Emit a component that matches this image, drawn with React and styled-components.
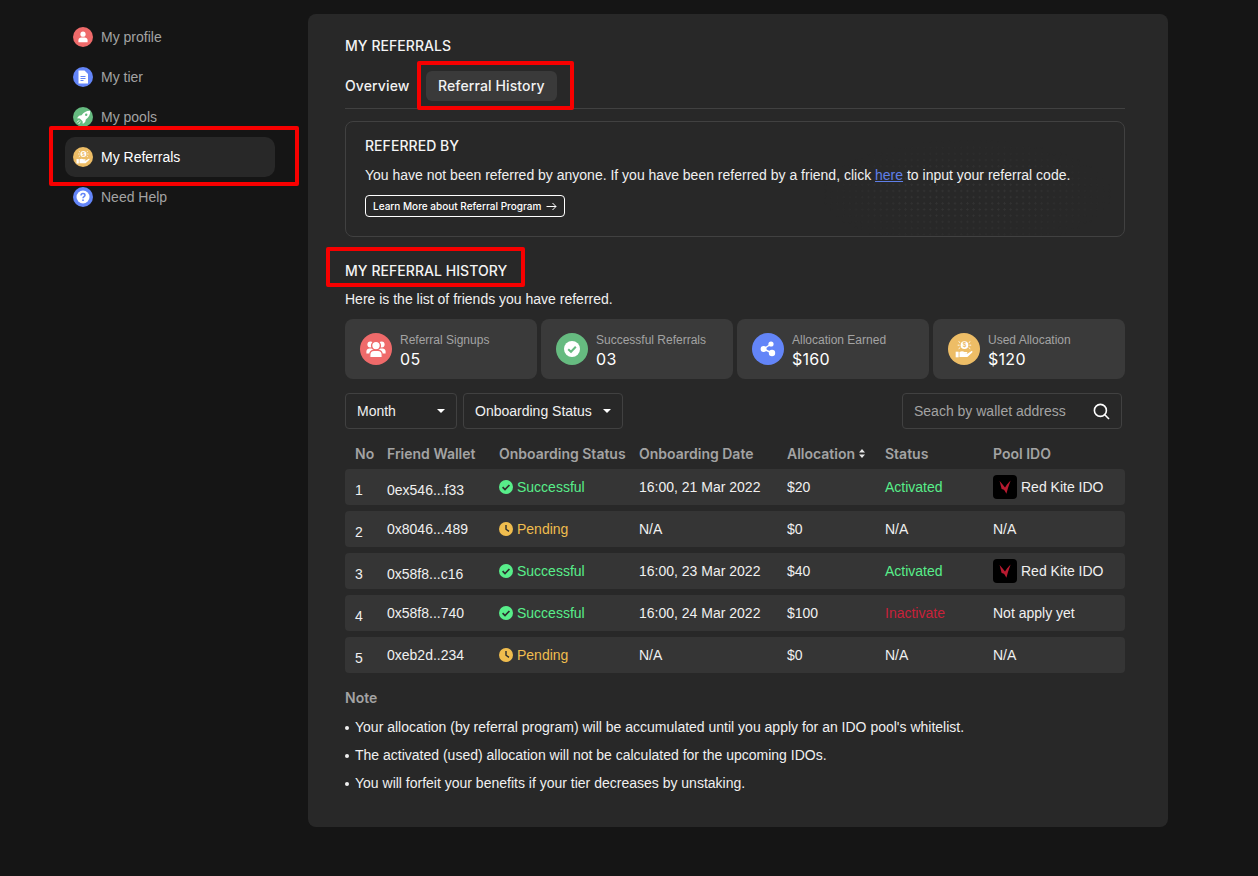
import React from 'react';
import styled, { createGlobalStyle } from 'styled-components';

const inter = '"Inter", "Liberation Sans", sans-serif';
const helvetica = '"Liberation Sans", Arial, sans-serif';

const colors = {
  page: '#151515',
  panel: '#282828',
  stat: '#3a3a3a',
  row: '#353535',
  red: '#ef6a6a',
  blue: '#6385f8',
  green: '#66bb80',
  gold: '#edbd66',
  success: '#58ee8a',
  pending: '#f0bd4e',
  inactive: '#c8213a',
  muted: '#a3a3a3',
  line: '#414141',
};

const GlobalStyle = createGlobalStyle`
  html, body {
    margin: 0;
    padding: 0;
    background: ${colors.page};
  }
  * {
    box-sizing: border-box;
  }
`;

const Page = styled.div`
  display: flex;
  align-items: flex-start;
  width: 1258px;
  height: 876px;
  padding: 14px 0 0 65px;
  overflow: hidden;
  background: ${colors.page};
  color: #fff;
  font-family: ${helvetica};
`;

const Sidebar = styled.nav`
  display: flex;
  flex-direction: column;
  width: 210px;
  margin-top: 3px;
  margin-right: 33px;
`;

const NavItem = styled.div`
  position: relative;
  display: flex;
  align-items: center;
  gap: 8px;
  height: 40px;
  padding-left: 8px;
  border-radius: 10px;
  background: ${(p) => (p.$active ? colors.panel : 'transparent')};
  color: ${(p) => (p.$active ? '#fff' : colors.muted)};
  font-size: 14px;
`;

const Annotation = styled.div`
  position: absolute;
  top: ${(p) => p.$top}px;
  right: ${(p) => p.$right}px;
  bottom: ${(p) => p.$bottom}px;
  left: ${(p) => p.$left}px;
  border: 4px solid #f70000;
  border-radius: 2px;
  pointer-events: none;
  z-index: 2;
`;

const IconDisc = styled.span`
  display: flex;
  flex: none;
  align-items: center;
  justify-content: center;
  width: ${(p) => p.$size}px;
  height: ${(p) => p.$size}px;
  border-radius: 50%;
  background: ${(p) => p.$color};
`;

const Panel = styled.main`
  width: 860px;
  height: 813px;
  padding: 23px 43px 0 37px;
  border-radius: 8px;
  background: ${colors.panel};
`;

const Heading = styled.h2`
  position: relative;
  display: block;
  width: fit-content;
  margin: 0;
  color: #f4f4f4;
  font-family: ${inter};
  font-size: 14px;
  font-weight: 500;
  letter-spacing: 0.05px;
  line-height: 17px;
`;

const Tabs = styled.div`
  display: flex;
  align-items: center;
  gap: 16px;
  margin-top: 17px;
  padding-bottom: 7px;
  border-bottom: 1px solid ${colors.line};
  font-family: ${inter};
  font-size: 14px;
  font-weight: 500;
  letter-spacing: 0.12px;
`;

const Tab = styled.div`
  position: relative;
  display: flex;
  align-items: center;
  height: 30px;
  padding: ${(p) => (p.$active ? '0 12.5px 2px' : '0 0 2px')};
  border-radius: 6px;
  background: ${(p) => (p.$active ? '#3a3a3a' : 'transparent')};
  color: #f2f2f2;
`;

const ReferredCard = styled.section`
  position: relative;
  height: 116px;
  margin-top: 12px;
  padding: 15px 19px;
  overflow: hidden;
  border: 1px solid ${colors.line};
  border-radius: 8px;
`;

const DotPattern = styled.div`
  position: absolute;
  top: 4px;
  right: 12px;
  width: 290px;
  height: 110px;
  background-image: radial-gradient(circle, #333333 1px, transparent 1.2px);
  background-size: 6.2px 6.2px;
  -webkit-mask-image: radial-gradient(ellipse 50% 50% at 50% 62%, #000 35%, transparent 100%);
  mask-image: radial-gradient(ellipse 50% 50% at 50% 62%, #000 35%, transparent 100%);
`;

const ReferredText = styled.p`
  position: relative;
  margin: 13px 0 0;
  color: #f0f0f0;
  font-size: 14px;
  line-height: 17px;
`;

const HereLink = styled.a`
  color: #5f7fe8;
  text-decoration: underline;
`;

const LearnMore = styled.button`
  position: relative;
  display: flex;
  align-items: center;
  gap: 5px;
  height: 22px;
  margin-top: 11px;
  padding: 0 7px;
  border: 1px solid #fff;
  border-radius: 4px;
  background: transparent;
  color: #fff;
  font-family: ${inter};
  font-size: 10px;
  font-weight: 500;
`;

const HistorySection = styled.section`
  margin-top: 25px;
`;

const Intro = styled.p`
  margin: 12px 0 0;
  color: #f0f0f0;
  font-size: 14px;
  line-height: 17px;
`;

const StatGrid = styled.div`
  display: grid;
  grid-template-columns: repeat(4, 192px);
  gap: 4px;
  margin-top: 11px;
`;

const StatCard = styled.div`
  display: flex;
  align-items: center;
  gap: 8px;
  height: 60px;
  padding-left: 15px;
  border-radius: 8px;
  background: ${colors.stat};
`;

const StatText = styled.div`
  padding-top: 3px;
`;

const StatLabel = styled.div`
  color: ${colors.muted};
  font-size: 12px;
  line-height: 14px;
`;

const StatValue = styled.div`
  margin-top: 2px;
  color: #fff;
  font-family: ${inter};
  font-size: 16px;
  letter-spacing: 0.3px;
  line-height: 20px;
`;

const Filters = styled.div`
  display: flex;
  align-items: center;
  gap: 6px;
  margin-top: 14px;
`;

const Select = styled.div`
  display: flex;
  align-items: center;
  justify-content: space-between;
  width: ${(p) => p.$width}px;
  height: 36px;
  padding: 0 11px;
  border: 1px solid ${colors.line};
  border-radius: 4px;
  color: #f0f0f0;
  font-size: 14px;
`;

const Caret = styled.span`
  width: 0;
  height: 0;
  border-top: 4px solid #fff;
  border-right: 4px solid transparent;
  border-left: 4px solid transparent;
`;

const Search = styled.div`
  display: flex;
  align-items: center;
  justify-content: space-between;
  width: 220px;
  height: 36px;
  margin-left: auto;
  margin-right: 3px;
  padding: 0 11px;
  border: 1px solid ${colors.line};
  border-radius: 4px;
  color: ${colors.muted};
  font-size: 14px;
`;

const tableColumns = '32px 112px 140px 148px 98px 108px 1fr';

const TableHead = styled.div`
  display: grid;
  grid-template-columns: ${tableColumns};
  align-items: center;
  height: 18px;
  margin-top: 15px;
  padding-left: 10px;
  color: ${colors.muted};
  font-family: ${inter};
  font-size: 14px;
  font-weight: 600;
`;

const HeadCell = styled.div`
  display: flex;
  align-items: center;
  gap: 4px;
  white-space: nowrap;
`;

const TableBody = styled.div`
  display: flex;
  flex-direction: column;
  gap: 6px;
  margin-top: 7px;
`;

const Row = styled.div`
  display: grid;
  grid-template-columns: ${tableColumns};
  align-items: center;
  height: 36px;
  padding-left: 10px;
  border-radius: 4px;
  background: ${colors.row};
  color: #f0f0f0;
  font-size: 14px;
`;

const Cell = styled.div`
  display: flex;
  align-items: center;
  gap: 4px;
  padding-top: ${(p) => (p.$low ? '6px' : '0')};
  color: ${(p) => p.$color || 'inherit'};
  white-space: nowrap;
`;

const KiteBadge = styled.span`
  display: flex;
  flex: none;
  align-items: center;
  justify-content: center;
  width: 24px;
  height: 24px;
  border-radius: 4px;
  background: #000;
`;

const NoteTitle = styled.div`
  margin-top: 16px;
  color: ${colors.muted};
  font-family: ${inter};
  font-size: 14px;
  font-weight: 600;
  line-height: 17px;
`;

const NoteList = styled.ul`
  display: flex;
  flex-direction: column;
  gap: 11px;
  margin: 13px 0 0;
  padding: 0;
  list-style: none;
`;

const NoteItem = styled.li`
  position: relative;
  padding-left: 10px;
  color: #f0f0f0;
  font-size: 14px;
  line-height: 17px;

  &::before {
    content: '';
    position: absolute;
    top: 7px;
    left: 0;
    width: 4px;
    height: 4px;
    border-radius: 50%;
    background: #f0f0f0;
  }
`;

const ProfileIcon = () => (
  <svg width="12" height="12" viewBox="0 0 12 12" fill="#fff">
    <circle cx="6" cy="3.2" r="2.6" />
    <path d="M1.4 11.2V9.4C1.4 7.6 2.8 6.6 4.4 6.6h3.2c1.6 0 3 1 3 2.8v1.8z" />
  </svg>
);

const TierIcon = () => (
  <svg width="12" height="14" viewBox="0 0 12 14">
    <path d="M1.5 0.5H7.5L11 4V13.5H1.5z" fill="#fff" />
    <path d="M3.5 6.5H8.5M3.5 8.5H8.5M3.5 10.5H6.5" stroke="#6385f8" strokeWidth="1" />
  </svg>
);

const RocketIcon = () => (
  <svg width="15" height="15" viewBox="0 0 15 15" fill="#fff">
    <path d="M14.2 0.8C10.6 0.6 7.8 2.2 5.6 5.2L3 5.8 1 8.2l2.8.2 2.8 2.8.2 2.8 2.4-2 .6-2.6c3-2.2 4.6-5 4.4-8.4z" />
    <circle cx="10.2" cy="4.8" r="1.2" fill="#66bb80" />
    <path d="M3.2 10.2 1 12.4M4.6 11.6 2.6 14" stroke="#fff" strokeWidth="0.9" />
  </svg>
);

const HandCoinIcon = ({ size = 14, color = '#edbd66' }) => (
  <svg width={size} height={size} viewBox="0 0 16 16" fill="#fff">
    <circle cx="8.4" cy="4.6" r="3.4" />
    <text x="8.4" y="6.6" fontSize="5.6" fontWeight="700" textAnchor="middle" fill={color} fontFamily={helvetica}>$</text>
    <path d="M3.2 1.4 4.6 2.4M13.6 1.4 12.2 2.4M2.4 4.6H4M12.8 4.6h1.6M3.2 7.8 4.6 6.8M13.6 7.8 12.2 6.8" stroke="#fff" strokeWidth="0.8" />
    <rect x="0.6" y="10.4" width="2.6" height="5" />
    <path d="M4 10.6c1.6-.8 3-.8 4.4 0h2c.8 0 .8 1.4 0 1.4H8l3 .2 3.4-2.2c.9-.5 1.6.5.9 1.2l-4 3.6c-.3.3-.7.4-1.1.4H4z" />
  </svg>
);

const HelpIcon = () => (
  <svg width="14" height="14" viewBox="0 0 14 14">
    <circle cx="7" cy="7" r="6.5" fill="#fff" />
    <path d="M5 5.4C5 4.2 6 3.6 7 3.6S9 4.2 9 5.3C9 6.6 7 6.7 7 8.2" fill="none" stroke="#6385f8" strokeWidth="1.5" />
    <circle cx="7" cy="10.2" r="0.9" fill="#6385f8" />
  </svg>
);

const ArrowIcon = () => (
  <svg width="11" height="9" viewBox="0 0 11 9" fill="none" stroke="#fff" strokeWidth="1">
    <path d="M0.5 4.5H10M6.5 1l3.5 3.5L6.5 8" />
  </svg>
);

const GroupIcon = () => (
  <svg width="20" height="18" viewBox="0 0 20 18" fill="#fff">
    <circle cx="4.4" cy="4.6" r="3" />
    <circle cx="15.6" cy="4.6" r="3" />
    <path d="M0.4 13.6v-2.2c0-1.8 1.4-3 3-3h13.2c1.6 0 3 1.2 3 3v2.2z" />
    <circle cx="10" cy="5.6" r="4.4" stroke={colors.red} strokeWidth="1.4" />
    <path d="M3.8 17.6v-2.8c0-2.8 2-4.4 4.2-4.4h4c2.2 0 4.2 1.6 4.2 4.4v2.8z" stroke={colors.red} strokeWidth="1.2" />
  </svg>
);

const BigCheckIcon = () => (
  <svg width="18" height="18" viewBox="0 0 18 18">
    <circle cx="9" cy="9" r="8" fill="#fff" />
    <path d="M5.2 9.2 8 11.8l4.8-5" fill="none" stroke="#66bb80" strokeWidth="2" />
  </svg>
);

const ShareIcon = () => (
  <svg width="16" height="16" viewBox="0 0 16 16" fill="#fff">
    <circle cx="3.6" cy="8" r="3" />
    <circle cx="11" cy="3" r="2.6" />
    <circle cx="12" cy="12" r="3.2" />
    <path d="M3.6 8 11 3M3.6 8 12 12" stroke="#fff" strokeWidth="1.4" />
  </svg>
);

const SearchIcon = () => (
  <svg width="17" height="17" viewBox="0 0 17 17" fill="none" stroke="#fff" strokeWidth="1.6">
    <circle cx="7.4" cy="7.4" r="6" />
    <path d="M11.8 11.8 16 16" />
  </svg>
);

const SortIcon = () => (
  <svg width="6" height="9" viewBox="0 0 6 9" fill="#e6e6e6">
    <path d="M3 0 6 3.6H0zM3 9 0 5.4h6z" />
  </svg>
);

const SuccessIcon = () => (
  <svg width="14" height="14" viewBox="0 0 14 14">
    <circle cx="7" cy="7" r="7" fill={colors.success} />
    <path d="M3.6 7.2 6 9.6l4.4-4.6" fill="none" stroke="#2d2d2d" strokeWidth="1.7" />
  </svg>
);

const PendingIcon = () => (
  <svg width="14" height="14" viewBox="0 0 14 14">
    <circle cx="7" cy="7" r="7" fill={colors.pending} />
    <path d="M7 3v4.2l3 2.2" fill="none" stroke="#2d2d2d" strokeWidth="1.4" />
  </svg>
);

const KiteLogo = () => (
  <svg width="12" height="14" viewBox="0 0 12 14" fill="#b81a30">
    <path d="M0.6 1 3.6 4.6 6 7.4 8 4.6 11.6 0.4 9 8 7.4 13.8 5.6 10.6 4.4 9.6 2.6 9z" />
  </svg>
);

const navItems = [
  { label: 'My profile', color: colors.red, icon: <ProfileIcon /> },
  { label: 'My tier', color: colors.blue, icon: <TierIcon /> },
  { label: 'My pools', color: colors.green, icon: <RocketIcon /> },
  { label: 'My Referrals', color: colors.gold, icon: <HandCoinIcon size={14} />, active: true },
  { label: 'Need Help', color: colors.blue, icon: <HelpIcon /> },
];

const stats = [
  { label: 'Referral Signups', value: '05', color: colors.red, icon: <GroupIcon /> },
  { label: 'Successful Referrals', value: '03', color: colors.green, icon: <BigCheckIcon /> },
  { label: 'Allocation Earned', value: '$160', color: colors.blue, icon: <ShareIcon /> },
  { label: 'Used Allocation', value: '$120', color: colors.gold, icon: <HandCoinIcon size={18} /> },
];

const rows = [
  { no: 1, wallet: '0ex546...f33', lowWallet: true, state: 'ok', date: '16:00, 21 Mar 2022', amount: '$20', status: 'Activated', pool: 'kite' },
  { no: 2, wallet: '0x8046...489', state: 'wait', date: 'N/A', amount: '$0', status: 'N/A', pool: 'N/A' },
  { no: 3, wallet: '0x58f8...c16', lowWallet: true, state: 'ok', date: '16:00, 23 Mar 2022', amount: '$40', status: 'Activated', pool: 'kite' },
  { no: 4, wallet: '0x58f8...740', state: 'ok', date: '16:00, 24 Mar 2022', amount: '$100', status: 'Inactivate', pool: 'Not apply yet' },
  { no: 5, wallet: '0xeb2d..234', state: 'wait', date: 'N/A', amount: '$0', status: 'N/A', pool: 'N/A' },
];

const statusColors = {
  Activated: colors.success,
  Inactivate: colors.inactive,
};

const notes = [
  "Your allocation (by referral program) will be accumulated until you apply for an IDO pool's whitelist.",
  'The activated (used) allocation will not be calculated for the upcoming IDOs.',
  'You will forfeit your benefits if your tier decreases by unstaking.',
];

export default function App() {
  return (
    <Page>
      <GlobalStyle />
      <Sidebar>
        {navItems.map((item) => (
          <NavItem key={item.label} $active={item.active}>
            <IconDisc $size={20} $color={item.color}>{item.icon}</IconDisc>
            {item.label}
            {item.active && <Annotation $top={-11} $right={-24} $bottom={-9} $left={-16} />}
          </NavItem>
        ))}
      </Sidebar>

      <Panel>
        <Heading>MY REFERRALS</Heading>
        <Tabs>
          <Tab>Overview</Tab>
          <Tab $active>
            Referral History
            <Annotation $top={-10} $right={-17} $bottom={-9} $left={-9} />
          </Tab>
        </Tabs>

        <ReferredCard>
          <DotPattern />
          <Heading>REFERRED BY</Heading>
          <ReferredText>
            You have not been referred by anyone. If you have been referred by a friend, click{' '}
            <HereLink>here</HereLink> to input your referral code.
          </ReferredText>
          <LearnMore>
            Learn More about Referral Program
            <ArrowIcon />
          </LearnMore>
        </ReferredCard>

        <HistorySection>
          <Heading>
            MY REFERRAL HISTORY
            <Annotation $top={-15} $right={-18} $bottom={-8} $left={-19} />
          </Heading>
          <Intro>Here is the list of friends you have referred.</Intro>

          <StatGrid>
            {stats.map((stat) => (
              <StatCard key={stat.label}>
                <IconDisc $size={32} $color={stat.color}>{stat.icon}</IconDisc>
                <StatText>
                  <StatLabel>{stat.label}</StatLabel>
                  <StatValue>{stat.value}</StatValue>
                </StatText>
              </StatCard>
            ))}
          </StatGrid>

          <Filters>
            <Select $width={112}>Month<Caret /></Select>
            <Select $width={160}>Onboarding Status<Caret /></Select>
            <Search>Seach by wallet address<SearchIcon /></Search>
          </Filters>

          <TableHead>
            <HeadCell>No</HeadCell>
            <HeadCell>Friend Wallet</HeadCell>
            <HeadCell>Onboarding Status</HeadCell>
            <HeadCell>Onboarding Date</HeadCell>
            <HeadCell>Allocation <SortIcon /></HeadCell>
            <HeadCell>Status</HeadCell>
            <HeadCell>Pool IDO</HeadCell>
          </TableHead>

          <TableBody>
            {rows.map((row) => (
              <Row key={row.no}>
                <Cell $low>{row.no}</Cell>
                <Cell $low={row.lowWallet}>{row.wallet}</Cell>
                <Cell $color={row.state === 'ok' ? colors.success : colors.pending}>
                  {row.state === 'ok' ? <SuccessIcon /> : <PendingIcon />}
                  {row.state === 'ok' ? 'Successful' : 'Pending'}
                </Cell>
                <Cell>{row.date}</Cell>
                <Cell>{row.amount}</Cell>
                <Cell $color={statusColors[row.status]}>{row.status}</Cell>
                <Cell>
                  {row.pool === 'kite' ? (
                    <>
                      <KiteBadge><KiteLogo /></KiteBadge>
                      Red Kite IDO
                    </>
                  ) : row.pool}
                </Cell>
              </Row>
            ))}
          </TableBody>

          <NoteTitle>Note</NoteTitle>
          <NoteList>
            {notes.map((note) => (
              <NoteItem key={note}>{note}</NoteItem>
            ))}
          </NoteList>
        </HistorySection>
      </Panel>
    </Page>
  );
}
